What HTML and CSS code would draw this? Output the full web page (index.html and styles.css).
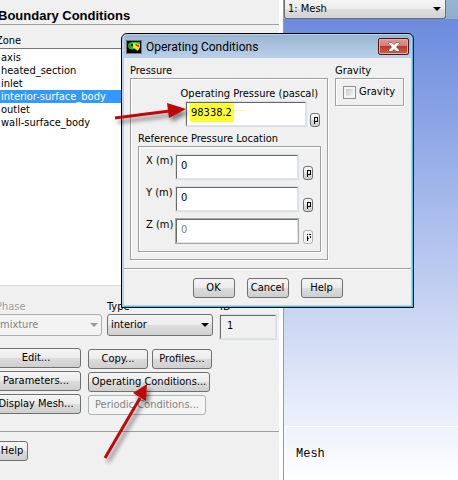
FILE: index.html
```html
<!DOCTYPE html>
<html lang="en">
<head>
<meta charset="utf-8">
<title>Boundary Conditions</title>
<link rel="stylesheet" href="styles.css">
</head>
<body>
<div class="app">
  <main class="panel">
    <h1>Boundary Conditions</h1>
    <div class="task">
      <label class="zone-label" for="zone">Zone</label>
      <select class="zones" id="zone" size="6">
        <option>axis</option>
        <option>heated_section</option>
        <option>inlet</option>
        <option selected>interior-surface_body</option>
        <option>outlet</option>
        <option>wall-surface_body</option>
      </select>
      <div class="properties">
        <div class="field phase">
          <label class="dim" for="phase">Phase</label>
          <span class="combo"><select id="phase" disabled><option>mixture</option></select><svg viewBox="0 0 8 4"><path d="M0 0h8L4 4z"/></svg></span>
        </div>
        <div class="field type">
          <label for="type">Type</label>
          <span class="combo"><select id="type"><option>interior</option></select><svg viewBox="0 0 8 4"><path d="M0 0h8L4 4z"/></svg></span>
        </div>
        <div class="field id">
          <label for="ident">ID</label>
          <input class="text readonly" id="ident" value="1" readonly>
        </div>
      </div>
      <div class="actions">
        <div class="column">
          <button>Edit...</button>
          <button>Parameters...</button>
          <button>Display Mesh...</button>
        </div>
        <div class="column wide">
          <div class="pair"><button>Copy...</button><button>Profiles...</button></div>
          <button>Operating Conditions...</button>
          <button disabled>Periodic Conditions...</button>
        </div>
      </div>
    </div>
    <footer><button>Help</button></footer>
  </main>
  <section class="graphics">
    <div class="toolbar">
      <span class="combo"><select aria-label="View"><option>1: Mesh</option></select><svg viewBox="0 0 8 4"><path d="M0 0h8L4 4z"/></svg></span>
    </div>
    <div class="viewport"><div class="caption">Mesh</div></div>
  </section>

  <div class="dialog" role="dialog" aria-labelledby="dialog-title">
    <header>
      <svg class="logo" viewBox="0 0 16 14">
        <path fill="#777" d="M0 0h16v14H0z"/><path fill="#000" d="M1 1h14v12H1z"/>
        <path fill="#0c3" d="M2 6c0-3 2-4 4-4h8v5l-2 4c-2 0-2-2-4-2-3 1-6 0-6-3z"/>
        <path fill="#fe0" d="M7 3l7 1v3l-2 3c-2 0-2-2-5-2z"/>
        <path fill="#e20" d="M9 4l4 1v2l-3-1zM2 6l2-1 1 3-2-1z"/><path fill="#000" d="M5 4h2v2H5z"/>
      </svg>
      <h2 id="dialog-title">Operating Conditions</h2>
      <button class="close" aria-label="Close"><svg viewBox="0 0 12 10"><path d="M1 1h3l2 2 2-2h3v1L8 5l3 3v1H8L6 7 4 9H1V8l3-3-3-3z"/></svg></button>
    </header>
    <div class="client">
      <div class="groups">
        <section class="group pressure">
          <h3>Pressure</h3>
          <div class="box">
            <label class="op-label" for="op">Operating Pressure (pascal)</label>
            <div class="op-row"><input class="text marked" id="op" value="98338.2"><button class="p" aria-label="Parameter"><svg viewBox="0 0 5 8"><path d="M1 8V1h3v4H1"/></svg></button></div>
            <section class="group">
              <h3>Reference Pressure Location</h3>
              <div class="box coords">
                <div class="row"><label for="x">X (m)</label><input class="text" id="x" value="0"><button class="p" aria-label="X parameter"><svg viewBox="0 0 5 8"><path d="M1 8V1h3v4H1"/></svg></button></div>
                <div class="row"><label for="y">Y (m)</label><input class="text" id="y" value="0"><button class="p" aria-label="Y parameter"><svg viewBox="0 0 5 8"><path d="M1 8V1h3v4H1"/></svg></button></div>
                <div class="row"><label for="z">Z (m)</label><input class="text" id="z" value="0" disabled><button class="p" aria-label="Z parameter" disabled><svg viewBox="0 0 5 8"><path stroke-dasharray="2 1" d="M1 8V1h3v4H1"/></svg></button></div>
              </div>
            </section>
          </div>
        </section>
        <section class="group gravity">
          <h3>Gravity</h3>
          <div class="box"><input type="checkbox" id="gravity"><label for="gravity">Gravity</label></div>
        </section>
      </div>
      <div class="buttons"><button>OK</button><button>Cancel</button><button>Help</button></div>
    </div>
  </div>

  <svg class="arrow to-pressure" viewBox="0 0 84 32">
    <path class="shaft" d="M5 15L60 8"/><path class="head" d="M57 0L76 6L59 15z"/>
  </svg>
  <svg class="arrow to-button" viewBox="0 0 60 92">
    <path class="shaft" d="M5 78L40 18"/><path class="head" d="M33 13L47 4L46 21z"/>
  </svg>
</div>
</body>
</html>
```
FILE: styles.css
```css
* { box-sizing: border-box; }

body {
  margin: 0;
  overflow: hidden;
  background: #f0f0f0;
  color: #000;
  font: 11px/14px "DejaVu Sans Condensed", Tahoma, "DejaVu Sans", sans-serif;
}

button, input, select { font: inherit; color: inherit; }

h1, h2, h3 { margin: 0; font-weight: normal; }

.app {
  position: relative;
  display: flex;
  min-height: 100vh;
  overflow: hidden;
}

/* Task panel */
.panel {
  width: 284px;
  flex: none;
  border-right: 1px solid #999;
  box-shadow: inset -4px 0 #fff;
  overflow: hidden;
}

.panel h1 {
  height: 25px;
  margin: 0 4px 0 -2px;
  padding-top: 7px;
  border-bottom: 1px solid #a0a0a0;
  font: bold 13px/17px "Liberation Sans", Arial, sans-serif;
}

.task {
  display: flex;
  flex-direction: column;
  height: 407px;
  margin-right: 4px;
  padding-top: 9px;
  border-bottom: 1px solid #a0a0a0;
}

.zone-label { margin: 0 0 0 -4px; }

.zones {
  height: 238px;
  margin: 0 3px 0 -4px;
  padding: 2px 0 0 3px;
  border: 1px solid #777;
  border-bottom-color: #ddd;
  border-radius: 0;
  background: #fff;
  overflow: hidden;
  outline: 0;
}

.zones option { min-height: 13px; height: 13px; padding: 0 1px; line-height: 13px; }

.zones option:checked {
  background: #39f linear-gradient(#39f, #39f);
  color: #fff;
  -webkit-text-fill-color: #fff;
}

.properties { display: flex; gap: 5px; margin: 14px 0 0 -5px; }
.field { display: flex; flex-direction: column; }
.field.phase { width: 107px; padding-left: 1px; }
.field.type { width: 106px; }
.field.id { width: 56px; margin-left: 2px; }

.dim { color: #999; text-shadow: 1px 1px #fff; }

.combo { position: relative; display: flex; height: 22px; }

.combo select {
  width: 100%;
  padding: 0 3px;
  appearance: none;
  border: 1px solid #707070;
  border-radius: 3px;
  background: linear-gradient(#f4f4f4, #ececec 50%, #dedede 50%, #d2d2d2);
}

.combo select:disabled { border-color: #adadad; background: #f3f3f3; color: #838383; opacity: 1; }

.combo svg { position: absolute; right: 4px; top: 9px; width: 8px; height: 4px; }
.combo select:disabled + svg { fill: #999; }

.text {
  min-width: 0;
  height: 26px;
  padding: 0 4px 4px;
  border: 1px solid;
  border-color: #696969 #e3e3e3 #e3e3e3 #696969;
  outline: 1px solid #d8dde8;
  border-radius: 0;
  background: #fff;
}

.text:disabled { color: #808080; outline-color: #a8a8a8; }
.text.readonly { width: 100%; height: 24px; background: #f0f0f0; padding-left: 6px; margin-top: 1px; }

button {
  height: 20px;
  padding: 0 0 1px;
  border: 1px solid #707070;
  border-radius: 3px;
  background: linear-gradient(#f5f5f5, #ebebeb 50%, #dcdcdc 50%, #cfcfcf);
  white-space: nowrap;
}

button:disabled { border-color: #adb2b5; background: #f4f4f4; color: #838383; }

.actions { display: flex; gap: 7px; margin: 9px 0 0 -9px; }
.column { display: flex; flex-direction: column; gap: 3px; width: 90px; }
.column.wide { width: 124px; padding-top: 1px; }
.wide > button { align-self: flex-start; width: 122px; }
.wide > button:last-child { width: 118px; }
.wide .pair { display: flex; gap: 4px; }
.pair button { flex: 1; }

.panel footer { padding: 9px 0 0; margin-left: -4px; }
.panel footer button { width: 32px; }

/* Graphics window */
.graphics { flex: 1; display: flex; flex-direction: column; }
.toolbar { height: 19px; background: linear-gradient(#9ab5d3, #91adc9); }
.toolbar .combo { width: 162px; height: 19px; }
.toolbar select { border-top: 0; border-radius: 0 0 3px 3px; }
.toolbar .combo svg { top: 7px; right: 5px; }

.viewport {
  flex: 1;
  display: flex;
  align-items: flex-end;
  padding-left: 1px;
  background: linear-gradient(#6b8bdd, #fff);
}

.caption {
  flex: 1;
  height: 54px;
  padding: 20px 10px;
  border: solid #fff;
  border-width: 1px 0 0 1px;
  font: 12px/14px "Liberation Mono", "Courier New", monospace;
}

/* Operating Conditions dialog */
.dialog {
  position: absolute;
  left: 121px;
  top: 33px;
  width: 293px;
  padding: 1px 2px 2px;
  border: 1px solid #000;
  border-radius: 6px 6px 0 0;
  box-shadow: inset -1px -1px #33c8e8;
  background: #b9d1ea;
}

.dialog header {
  display: flex;
  align-items: center;
  height: 23px;
  padding: 0 1px 0 2px;
  border-radius: 4px 4px 0 0;
  background: linear-gradient(#9bb5d1, #b9d1ea);
}

.logo { width: 16px; height: 14px; }

.dialog h2 {
  flex: 1;
  margin-left: 4px;
  font: 12px/16px Roboto, "Segoe UI", sans-serif;
}

.close {
  display: grid;
  place-items: center;
  width: 31px;
  height: 17px;
  margin-right: 1px;
  padding: 0;
  border-color: #4c1a20;
  border-radius: 2px;
  box-shadow: inset 0 0 0 1px #e9a79a;
  background: linear-gradient(#e2978b, #d47d70 48%, #b83b23 50%, #c9644e);
}

.close svg { width: 12px; height: 10px; fill: #fff; stroke: #555b70; stroke-width: 1; paint-order: stroke; }

.client { padding-top: 6px; background: #f0f0f0; }
.groups { display: flex; align-items: flex-start; gap: 7px; padding: 0 7px 8px 6px; }
.group h3 { font-size: 11px; line-height: 14px; }
.box { border: 1px solid #a0a0a0; box-shadow: 1px 1px #fff, inset 1px 1px #fff; }

.pressure { width: 198px; }
.pressure > .box { padding: 8px 6px 7px 7px; }
.op-label { display: block; margin-right: 3px; text-align: right; white-space: nowrap; }

.op-row { display: flex; align-items: flex-end; justify-content: flex-end; gap: 4px; height: 26px; }
.op-row .text { width: 120px; height: 24px; align-self: flex-start; margin-top: 1px; }

.op-row .p { margin-right: 1px; }

.marked {
  background:
    linear-gradient(#ff3, #ff3) 3px 0 / 44px 19px no-repeat,
    linear-gradient(#ff8, #ff8) 0 7px / 58px 1px no-repeat,
    #fff;
}

.p {
  display: grid;
  place-items: center;
  flex: none;
  width: 10px;
  height: 14px;
  padding: 0;
}

.p svg { width: 5px; height: 8px; fill: none; stroke: #000; stroke-width: 1; shape-rendering: crispEdges; }

.pressure .group { margin-top: 5px; }
.coords { display: grid; grid-template-columns: minmax(0, 1fr); gap: 6px; padding: 7px; }
.row { display: flex; height: 26px; }
.row label { width: 30px; white-space: nowrap; }
.row .text { flex: 1; height: 24px; margin: 1px 5px 0 0; }
.row .p { align-self: flex-end; }

.gravity { flex: 1; }
.gravity .box { display: flex; align-items: center; gap: 3px; height: 28px; padding-left: 7px; }

.gravity input {
  width: 13px;
  height: 13px;
  margin: 0;
  appearance: none;
  border: 1px solid #8e8f8f;
  box-shadow: inset 0 0 0 2px #f4f4f4;
  background: linear-gradient(135deg, #b8bdc5, #fff);
}

.buttons {
  display: flex;
  justify-content: center;
  gap: 12px;
  padding: 9px 0 7px;
  border-top: 1px solid #a0a0a0;
  box-shadow: inset 0 1px #fff;
}

.buttons button { width: 42px; }

/* Callout arrows */
.arrow { position: absolute; overflow: visible; filter: drop-shadow(3px 4px 2px #0007); }
.shaft { fill: none; stroke: #c00808; stroke-width: 3; }
.head { fill: #c00808; }
.to-pressure { left: 110px; top: 103px; width: 84px; height: 32px; }
.to-button { left: 100px; top: 380px; width: 60px; height: 92px; }
```
